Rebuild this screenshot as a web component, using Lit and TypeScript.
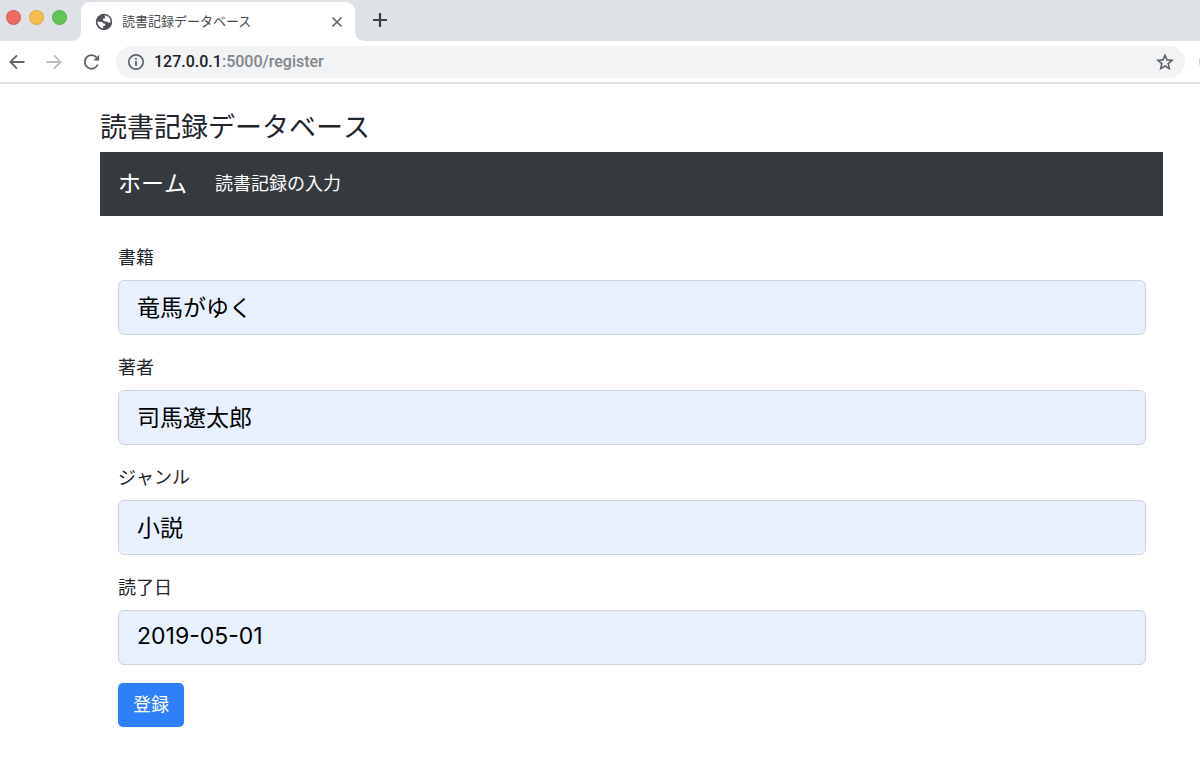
import { LitElement, html, css } from "lit";
import { customElement, property, state } from "lit/decorators.js";

@customElement("browser-chrome")
class BrowserChrome extends LitElement {
  static styles = css`
    :host {
      display: block;
      font-family: Inter, "Noto Sans CJK JP", sans-serif;
      color: #5f6368;
    }
    * {
      box-sizing: border-box;
    }
    button {
      display: grid;
      place-items: center;
      flex: none;
      margin: 0;
      padding: 0;
      border: 0;
      background: none;
      color: inherit;
    }
    svg {
      display: block;
    }
    .strip {
      display: flex;
      height: 41px;
      padding-left: 6px;
      background: #dee1e6;
    }
    .lights {
      display: flex;
      gap: 8px;
      padding: 10px 6px 0 0;
    }
    .light {
      width: 15px;
      height: 15px;
      border: 1px solid rgba(0, 0, 0, 0.1);
      border-radius: 50%;
    }
    .close {
      background: #ed6b60;
    }
    .minimize {
      background: #f5be4f;
    }
    .zoom {
      background: #62c655;
    }
    .flare {
      flex: none;
      align-self: flex-end;
      width: 8px;
      height: 8px;
      background: radial-gradient(circle at 0 0, #dee1e6 7px, #fff 8px);
    }
    .flare.right {
      background: radial-gradient(circle at 100% 0, #dee1e6 7px, #fff 8px);
    }
    .tab {
      display: flex;
      align-items: center;
      flex: none;
      width: 274px;
      margin-top: 2px;
      padding: 0 10px 0 14px;
      border-radius: 9px 9px 0 0;
      background: #fff;
    }
    .tab-title {
      flex: 1;
      padding: 0 0 2px 9px;
      font-size: 13px;
      line-height: 20px;
      color: #45494d;
    }
    .new-tab {
      width: 24px;
      height: 24px;
      margin: 8px 0 0 5px;
      color: #3c4043;
    }
    .toolbar {
      display: flex;
      align-items: center;
      height: 43px;
      padding-left: 8px;
      border-bottom: 2px solid #e0e1e3;
      overflow: hidden;
      background: #fff;
    }
    .nav {
      display: flex;
      gap: 19px;
      margin-right: 14px;
    }
    .nav button:disabled {
      color: #babcbe;
    }
    .omnibox {
      display: flex;
      align-items: center;
      flex: 1;
      min-width: 0;
      height: 32px;
      padding: 0 11px;
      border-radius: 16px;
      background: #f1f3f4;
    }
    .url {
      flex: 1;
      padding-left: 9px;
      font-size: 16px;
      font-weight: 500;
      line-height: 20px;
      font-family: Roboto, sans-serif;
      color: #80868b;
    }
    .host {
      color: #202124;
    }
    .avatar {
      flex: none;
      width: 20px;
      height: 20px;
      margin: 0 -19px 0 14px;
      border-radius: 50%;
      background: #c9cbce;
    }
  `;

  @property() title = "";
  @property() host = "";
  @property() path = "";

  render() {
    return html`
      <div class="strip">
        <div class="lights">
          <button class="light close" aria-label="閉じる"></button>
          <button class="light minimize" aria-label="最小化"></button>
          <button class="light zoom" aria-label="拡大"></button>
        </div>
        <i class="flare"></i>
        <div class="tab">
          <svg width="18" height="18" viewBox="0 0 18 18" aria-hidden="true">
            <circle cx="9" cy="9" r="8.2" fill="#4d5156" />
            <path d="M2.4 8.6 6.8 9q1.5.2 1.6 1.5l1.8.2v1.9l-2 .5v2.5Q3 14.800 2.400 8.600Z" fill="#fff" />
            <path d="M9.300 2.300Q15.500 3 15.700 9.300L13.500 9.800 12.100 8.400H9.600L8.100 7.300V5.600H9.800L10.200 4.200Z" fill="#fff" />
          </svg>
          <span class="tab-title">${this.title}</span>
          <button aria-label="タブを閉じる">
            <svg width="16" height="16" viewBox="0 0 16 16">
              <path d="M3.500 3.500 12.500 12.500M12.500 3.500 3.500 12.500" fill="none" stroke="currentColor" stroke-width="1.7" />
            </svg>
          </button>
        </div>
        <i class="flare right"></i>
        <button class="new-tab" aria-label="新しいタブ">
          <svg width="24" height="24" viewBox="0 0 24 24">
            <path d="M12 5v14M5 12h14" fill="none" stroke="currentColor" stroke-width="2.200" />
          </svg>
        </button>
      </div>
      <div class="toolbar">
        <div class="nav">
          <button aria-label="戻る">
            <svg width="18" height="18" viewBox="0 0 18 18">
              <path d="M16.500 9H2.500M9 2.300 2.300 9 9 15.700" fill="none" stroke="currentColor" stroke-width="1.800" />
            </svg>
          </button>
          <button aria-label="進む" disabled>
            <svg width="18" height="18" viewBox="0 0 18 18">
              <path d="M1.500 9H15.500M9 2.300 15.700 9 9 15.700" fill="none" stroke="currentColor" stroke-width="1.800" />
            </svg>
          </button>
          <button aria-label="再読み込み">
            <svg width="20" height="18" viewBox="0 0 20 18">
              <path d="M15.800 11.500A6.800 6.800 0 1 1 14.600 4.400" fill="none" stroke="currentColor" stroke-width="1.800" />
              <path d="M17.200 1.800V7.600H11.400Z" fill="currentColor" />
            </svg>
          </button>
        </div>
        <div class="omnibox">
          <button aria-label="サイト情報">
            <svg width="18" height="18" viewBox="0 0 18 18">
              <circle cx="9" cy="9" r="7.200" fill="none" stroke="currentColor" stroke-width="1.700" />
              <path d="M9 8v5M9 5v1.800" stroke="currentColor" stroke-width="1.800" />
            </svg>
          </button>
          <span class="url"><span class="host">${this.host}</span>${this.path}</span>
          <button aria-label="ブックマーク">
            <svg width="18" height="18" viewBox="0 0 18 18">
              <path
                d="M9 2.200 11 6.900 16 7.300 12.200 10.600 13.300 15.600 9 13 4.700 15.600 5.800 10.600 2 7.300 7 6.900Z"
                fill="none"
                stroke="currentColor"
                stroke-width="1.600"
              />
            </svg>
          </button>
        </div>
        <i class="avatar"></i>
      </div>
    `;
  }
}

interface Field {
  id: string;
  label: string;
  value: string;
}

@customElement("app-root")
class AppRoot extends LitElement {
  static styles = css`
    :host {
      display: block;
      min-height: 100vh;
      background: #fff;
      color: #212529;
      font-family: Inter, "Noto Sans CJK JP", sans-serif;
    }
    * {
      box-sizing: border-box;
    }
    .page {
      margin: 0 37px 0 100px;
      padding-top: 28px;
      font-kerning: none;
    }
    h1 {
      margin: 0 0 8px;
      font-size: 27px;
      font-weight: 400;
      line-height: 32px;
    }
    .navbar {
      display: flex;
      align-items: center;
      gap: 28px;
      height: 64px;
      padding: 0 18px;
      background: #343a3e;
    }
    .navbar a {
      color: #fff;
      font-size: 18px;
      line-height: 28px;
      text-decoration: none;
    }
    .navbar .brand {
      font-size: 23px;
    }
    form {
      padding: 27px 17px 0 18px;
    }
    .field {
      margin-bottom: 18px;
    }
    label {
      display: block;
      margin-bottom: 8px;
      font-size: 18px;
      line-height: 29px;
    }
    input {
      display: block;
      width: 100%;
      height: 55px;
      padding: 0 18px 3px;
      border: 1px solid #ced4da;
      border-radius: 6px;
      background: #e8f0fe;
      color: #000;
      font-family: inherit;
      font-size: 23px;
      font-kerning: inherit;
    }
    .submit {
      display: block;
      height: 44px;
      padding: 0 15px;
      border: 0;
      border-radius: 5px;
      background: #2f7ff8;
      color: #fff;
      font-family: inherit;
      font-size: 18px;
      line-height: 28px;
    }
  `;

  @state() private fields: Field[] = [
    { id: "book", label: "書籍", value: "竜馬がゆく" },
    { id: "author", label: "著者", value: "司馬遼太郎" },
    { id: "genre", label: "ジャンル", value: "小説" },
    { id: "finished", label: "読了日", value: "2019-05-01" },
  ];

  render() {
    return html`
      <browser-chrome title="読書記録データベース" host="127.0.0.1" path=":5000/register"></browser-chrome>
      <main class="page">
        <h1>読書記録データベース</h1>
        <nav class="navbar">
          <a class="brand" href="#home">ホーム</a>
          <a href="#register">読書記録の入力</a>
        </nav>
        <form @submit=${(e: Event) => e.preventDefault()}>
          ${this.fields.map(
            (f) => html`
              <div class="field">
                <label for=${f.id}>${f.label}</label>
                <input id=${f.id} name=${f.id} type="text" .value=${f.value} />
              </div>
            `
          )}
          <button class="submit" type="submit">登録</button>
        </form>
      </main>
    `;
  }
}
